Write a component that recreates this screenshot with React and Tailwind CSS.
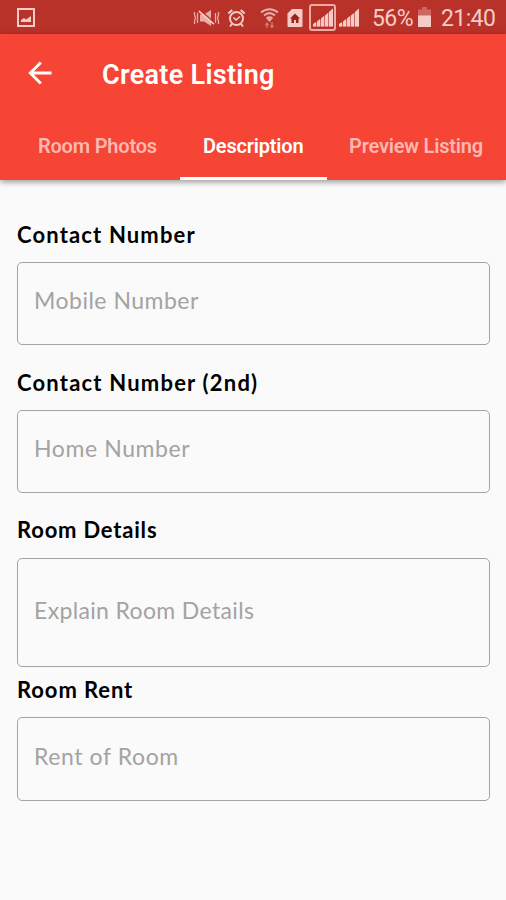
import { useState } from "react";

const tabs = [
  { name: "Room Photos", className: "w-[180px] pl-[38px]" },
  { name: "Description", className: "w-[147px] pl-[23px]" },
  { name: "Preview Listing", className: "w-[179px] pl-[22px]" },
];

const fields = [
  {
    label: "Contact Number",
    placeholder: "Mobile Number",
    text: "tracking-[1.150px]",
    box: "h-[83px] pb-[7px] mb-[23px] tracking-[0.5px]",
  },
  {
    label: "Contact Number (2nd)",
    placeholder: "Home Number",
    text: "tracking-[1.200px]",
    box: "h-[83px] pb-[7px] mb-[22px] tracking-[0.6px]",
  },
  {
    label: "Room Details",
    placeholder: "Explain Room Details",
    text: "mb-px tracking-[0.8px]",
    box: "h-[109px] pb-[6px] mb-[8px] tracking-[0.350px]",
  },
  {
    label: "Room Rent",
    placeholder: "Rent of Room",
    text: "tracking-[0.9px]",
    box: "h-[84px] pb-[7px] tracking-[0.6px]",
  },
];

function PictureIcon() {
  return (
    <svg width="18" height="19" viewBox="0 0 18 19" fill="none">
      <rect x="1" y="1" width="16" height="17" stroke="currentColor" strokeWidth="2" />
      <path d="M4 14V12l3-2 2 1.500 5-3.500v6z" fill="currentColor" />
    </svg>
  );
}

function MuteIcon() {
  return (
    <svg width="27" height="20" viewBox="0 0 27 20" fill="none" stroke="currentColor">
      <path d="M1.500 4v3l1 3-1 3v3M4.500 5v10M25.500 4v3l-1 3 1 3v3M22.500 5v10" strokeWidth="1.300" opacity=".8" />
      <path d="M7 6.500h4l7-4.500v16l-7-4.500H7z" fill="currentColor" fillOpacity=".8" stroke="none" />
      <path d="M6 3l15 13" strokeWidth="2" />
      <path d="M7 2l15 13" stroke="#b8322a" strokeWidth="1.200" />
    </svg>
  );
}

function AlarmIcon() {
  return (
    <svg width="19" height="20" viewBox="0 0 19 20" fill="none" stroke="currentColor">
      <circle cx="9.500" cy="10.500" r="6.500" strokeWidth="2" />
      <path d="M1.300 5.500l4-3.500M17.700 5.500l-4-3.500M5 16l-2 2.500M14 16l2 2.500" strokeWidth="2" />
      <path d="M6.500 9.500l2.500 2.500 4-3.500" strokeWidth="1.600" />
    </svg>
  );
}

function WifiIcon() {
  return (
    <svg width="19" height="22" viewBox="0 0 19 22" fill="none" stroke="currentColor">
      <path d="M1 5.500c5-4.500 12-4.500 17 0M4 8.500c3.500-3 7.500-3 11 0M6.500 11.500c2-1.500 4-1.500 6 0" strokeWidth="2" />
      <path d="M6.500 11.500h6l-3 3.500z" fill="currentColor" stroke="none" />
      <path d="M7 21v-5M5.500 18L7 16l1.500 2M12 15v5M10.500 18.500L12 20.500l1.500-2" strokeWidth="1.300" opacity=".6" />
    </svg>
  );
}

function SimIcon() {
  return (
    <svg width="16" height="20" viewBox="0 0 16 20" fill="currentColor">
      <path d="M5 1h9.500q1 0 1 1v16q0 1-1 1h-13q-1 0-1-1V5.500z" />
      <path d="M8 5.500l5 5h-1.500V15H9v-3H7v3H4.500v-4.500H3z" fill="#9c211b" />
    </svg>
  );
}

function Bars() {
  return (
    <svg width="20" height="19" viewBox="0 0 20 18" fill="currentColor">
      <path d="M0 18v-2.500l3-2V18zM4 18v-5l3-2.500V18zM8 18V10l3-2.500V18zM12 18V7l3-2.500V18zM16 18V3.500L20 0v18z" />
      <path d="M0 18L20 0v18z" opacity=".35" />
    </svg>
  );
}

function BatteryIcon() {
  return (
    <svg width="13" height="20" viewBox="0 0 13 20" fill="currentColor">
      <path d="M4 0h5v3H4zM0 2.500h13V9H0z" opacity=".35" />
      <path d="M0 8.500h13V20H0z" />
    </svg>
  );
}

function StatusBar() {
  return (
    <div className="flex h-[34px] items-center bg-[#b8322a] pl-[17px] text-[#f6cbc6]">
      <PictureIcon />
      <div className="ml-[158px] flex items-center pt-px">
        <MuteIcon />
        <div className="ml-[7px]">
          <AlarmIcon />
        </div>
        <div className="ml-[14px] opacity-80">
          <WifiIcon />
        </div>
        <div className="ml-[8px]">
          <SimIcon />
        </div>
        <div className="ml-[6px] flex h-[27px] w-[27px] items-center justify-center rounded-[3px] border-2 border-[#eeaaa3]">
          <Bars />
        </div>
        <div className="ml-[3px]">
          <Bars />
        </div>
      </div>
      <span className="ml-[13px] w-[44px] whitespace-nowrap pt-[5px] text-[23px] tracking-[-0.6px]">56%</span>
      <div className="ml-[2px]">
        <BatteryIcon />
      </div>
      <span className="ml-[10px] whitespace-nowrap pt-[5px] text-[23px] tracking-[-0.6px]">21:40</span>
    </div>
  );
}

function Header({ active, onChange }) {
  return (
    <header className="h-[146px] bg-[#f64435] text-white shadow-[0_2px_6px_rgba(0,0,0,0.4)]">
      <div className="flex h-[78px] items-center pl-[28px]">
        <button type="button" aria-label="Back">
          <svg width="24" height="24" viewBox="0 0 24 24" fill="none" stroke="currentColor" strokeWidth="2.900">
            <path d="M23.500 12H3M12.800 1.500L2.300 12l10.500 10.500" />
          </svg>
        </button>
        <h1 className="ml-[50px] whitespace-nowrap pt-[5px] text-[27px] font-semibold tracking-[0.3px]">Create Listing</h1>
      </div>
      <nav className="flex h-[68px]">
        {tabs.map((tab) => (
          <button
            key={tab.name}
            type="button"
            onClick={() => onChange(tab.name)}
            className={`${tab.className} whitespace-nowrap border-b-[3px] pt-[2px] text-left text-[20px] font-semibold tracking-[-0.2px] ${
              active === tab.name ? "border-white text-white" : "border-transparent text-[#fcb8b1]"
            }`}
          >
            {tab.name}
          </button>
        ))}
      </nav>
    </header>
  );
}

function App() {
  const [active, setActive] = useState("Description");

  return (
    <div className="h-[900px] w-[506px] overflow-hidden bg-[#fafafa] font-[Roboto,sans-serif]">
      <StatusBar />
      <Header active={active} onChange={setActive} />
      <form className="flex flex-col px-[17px] pt-[40px] font-[Lato,sans-serif]">
        {fields.map((field) => (
          <label key={field.label} className="flex flex-col">
            <span className={`${field.text} h-[30px] text-[22px] leading-[29px] font-bold text-black`}>
              {field.label}
            </span>
            <input
              type="text"
              placeholder={field.placeholder}
              className={`${field.box} mt-[12px] w-[473px] rounded-[5px] border-[1.500px] border-[#a3a3a3] pl-[16px] text-[23px] placeholder:text-[#a3a3a3]`}
            />
          </label>
        ))}
      </form>
    </div>
  );
}

export default App;
